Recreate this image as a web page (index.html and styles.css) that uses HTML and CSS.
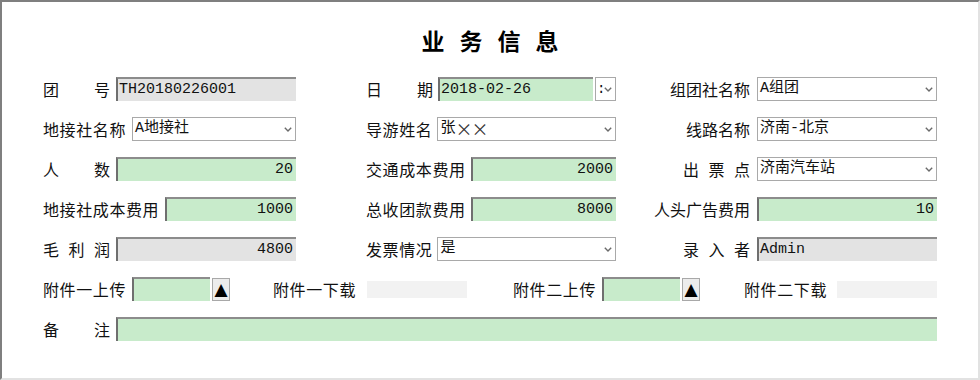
FILE: index.html
```html
<!DOCTYPE html>
<html lang="zh-CN">
<head>
<meta charset="utf-8">
<title>业务信息</title>
<link rel="stylesheet" href="styles.css">
</head>
<body>
<div class="frame">
  <h1 class="title">业务信息</h1>
  <div class="grid">
    <div class="field c1"><span class="lbl just"><span>团</span><span>号</span></span><div class="box ro">TH20180226001</div></div>
    <div class="field c2"><span class="lbl just"><span>日</span><span>期</span></span><div class="box green">2018-02-26</div><div class="minisel"><span class="colon">:</span><svg class="chev" width="8" height="5" viewBox="0 0 8 5"><polyline points="0.8,0.8 4,4 7.2,0.8" fill="none" stroke="#6b6b6b" stroke-width="1.4"/></svg></div></div>
    <div class="field c3"><span class="lbl">组团社名称</span><div class="sel">A组团<svg class="chev" width="8" height="5" viewBox="0 0 8 5"><polyline points="0.8,0.8 4,4 7.2,0.8" fill="none" stroke="#6b6b6b" stroke-width="1.4"/></svg></div></div>

    <div class="field c1"><span class="lbl">地接社名称</span><div class="sel">A地接社<svg class="chev" width="8" height="5" viewBox="0 0 8 5"><polyline points="0.8,0.8 4,4 7.2,0.8" fill="none" stroke="#6b6b6b" stroke-width="1.4"/></svg></div></div>
    <div class="field c2"><span class="lbl">导游姓名</span><div class="sel">张<span class="times">×</span><span class="times">×</span><svg class="chev" width="8" height="5" viewBox="0 0 8 5"><polyline points="0.8,0.8 4,4 7.2,0.8" fill="none" stroke="#6b6b6b" stroke-width="1.4"/></svg></div></div>
    <div class="field c3"><span class="lbl">线路名称</span><div class="sel">济南-北京<svg class="chev" width="8" height="5" viewBox="0 0 8 5"><polyline points="0.8,0.8 4,4 7.2,0.8" fill="none" stroke="#6b6b6b" stroke-width="1.4"/></svg></div></div>

    <div class="field c1"><span class="lbl just"><span>人</span><span>数</span></span><div class="box green num">20</div></div>
    <div class="field c2"><span class="lbl">交通成本费用</span><div class="box green num">2000</div></div>
    <div class="field c3"><span class="lbl just"><span>出</span><span>票</span><span>点</span></span><div class="sel">济南汽车站<svg class="chev" width="8" height="5" viewBox="0 0 8 5"><polyline points="0.8,0.8 4,4 7.2,0.8" fill="none" stroke="#6b6b6b" stroke-width="1.4"/></svg></div></div>

    <div class="field c1"><span class="lbl">地接社成本费用</span><div class="box green num">1000</div></div>
    <div class="field c2"><span class="lbl">总收团款费用</span><div class="box green num">8000</div></div>
    <div class="field c3"><span class="lbl">人头广告费用</span><div class="box green num">10</div></div>

    <div class="field c1"><span class="lbl just"><span>毛</span><span>利</span><span>润</span></span><div class="box ro num">4800</div></div>
    <div class="field c2"><span class="lbl">发票情况</span><div class="sel">是<svg class="chev" width="8" height="5" viewBox="0 0 8 5"><polyline points="0.8,0.8 4,4 7.2,0.8" fill="none" stroke="#6b6b6b" stroke-width="1.4"/></svg></div></div>
    <div class="field c3"><span class="lbl just"><span>录</span><span>入</span><span>者</span></span><div class="box ro">Admin</div></div>
  </div>

  <div class="attach">
    <div class="acell up1"><span class="lbl">附件一上传</span><div class="box green small"></div><div class="upbtn">▲</div></div>
    <div class="acell dl1"><span class="lbl">附件一下载</span><div class="dlbox"></div></div>
    <div class="acell up2"><span class="lbl">附件二上传</span><div class="box green small"></div><div class="upbtn">▲</div></div>
    <div class="acell dl2"><span class="lbl">附件二下载</span><div class="dlbox"></div></div>
  </div>

  <div class="memo field">
    <span class="lbl just"><span>备</span><span>注</span></span><div class="box green"></div>
  </div>
</div>
</body>
</html>
```

FILE: styles.css
```css
html, body {
  margin: 0;
  padding: 0;
  background: #ffffff;
}

body {
  font-family: "Noto Sans CJK SC", "Noto Sans", sans-serif;
  color: #111111;
}

.frame {
  box-sizing: border-box;
  width: 980px;
  height: 380px;
  border-top: 2px solid #7f7f7f;
  border-left: 2px solid #7f7f7f;
  border-right: 2px solid #e2e2e2;
  border-bottom: 2px solid #e2e2e2;
  padding: 23px 0 0 41px;
  background: #ffffff;
}

.title {
  margin: 0 0 22px -41px;
  height: 30px;
  line-height: 30px;
  font-size: 23px;
  font-weight: bold;
  letter-spacing: 15px;
  text-align: center;
  padding-left: 15px;
  color: #000000;
}

.grid {
  display: grid;
  grid-template-columns: 323px 284px 287px;
  grid-auto-rows: 24px;
  row-gap: 16px;
}

.field {
  display: flex;
  align-items: center;
  height: 24px;
  gap: 6px;
}

.c1 { width: 253px; }
.c2 { width: 250px; gap: 5px; }
.c3 { width: 287px; gap: 7px; }

.lbl {
  font-size: 16px;
  line-height: 24px;
  letter-spacing: 0.6px;
  white-space: nowrap;
  flex: none;
}

.just {
  display: flex;
  justify-content: space-between;
  width: 67px;
  letter-spacing: 0;
}

.c3 .lbl {
  margin-left: auto;
}

.c3 .lbl:not(.just) {
  letter-spacing: 0;
}

.box, .sel, .minisel {
  box-sizing: border-box;
  height: 24px;
  font-family: "Liberation Mono", "Noto Sans CJK SC", monospace;
  font-size: 15px;
  line-height: 22px;
  white-space: nowrap;
  overflow: hidden;
}

.box {
  flex: 1;
  min-width: 0;
  border-top: 2px solid #8c8c8c;
  border-left: 2px solid #6f6f6f;
  padding: 0 3px 0 1px;
  color: #111111;
}

.c3 .box, .c3 .sel {
  flex: none;
  width: 180px;
}

.green { background: #c8ebcb; }
.ro { background: #e3e3e3; }
.num { text-align: right; }

.sel {
  flex: 1;
  min-width: 0;
  display: flex;
  align-items: center;
  background: #ffffff;
  border: 1px solid #a9a9a9;
  padding: 0 0 0 2px;
  position: relative;
  color: #111111;
}

.times {
  font-family: "Noto Sans CJK SC", sans-serif;
  font-size: 17px;
  display: inline-block;
  width: 16px;
  text-align: center;
  color: #333333;
}

.chev {
  position: absolute;
  right: 3px;
  top: 9px;
}

.minisel {
  flex: none;
  width: 21px;
  margin-left: -3px;
  position: relative;
  background: #ffffff;
  border: 1px solid #a9a9a9;
  padding-left: 1px;
}

.minisel .colon {
  font-size: 14px;
}

.attach {
  display: flex;
  align-items: center;
  height: 24px;
  margin-top: 16px;
}

.acell {
  display: flex;
  align-items: center;
  height: 24px;
}

.up1 { width: 188px; }
.dl1 { width: 194px; margin-left: 42px; }
.up2 { width: 188px; margin-left: 46px; }
.dl2 { width: 193px; margin-left: 43px; }

.box.small {
  flex: none;
  width: 78px;
  margin-left: 6px;
}

.upbtn {
  box-sizing: border-box;
  width: 18px;
  height: 23px;
  margin-left: 2px;
  background: #ececec;
  border: 1px solid #a8a8a8;
  font-size: 17px;
  line-height: 20px;
  text-align: center;
  color: #000000;
  font-family: "DejaVu Sans", sans-serif;
  overflow: hidden;
}

.dlbox {
  width: 100px;
  height: 17px;
  margin-left: auto;
  background: #f2f2f2;
}

.memo {
  margin-top: 16px;
  width: 894px;
}
```
